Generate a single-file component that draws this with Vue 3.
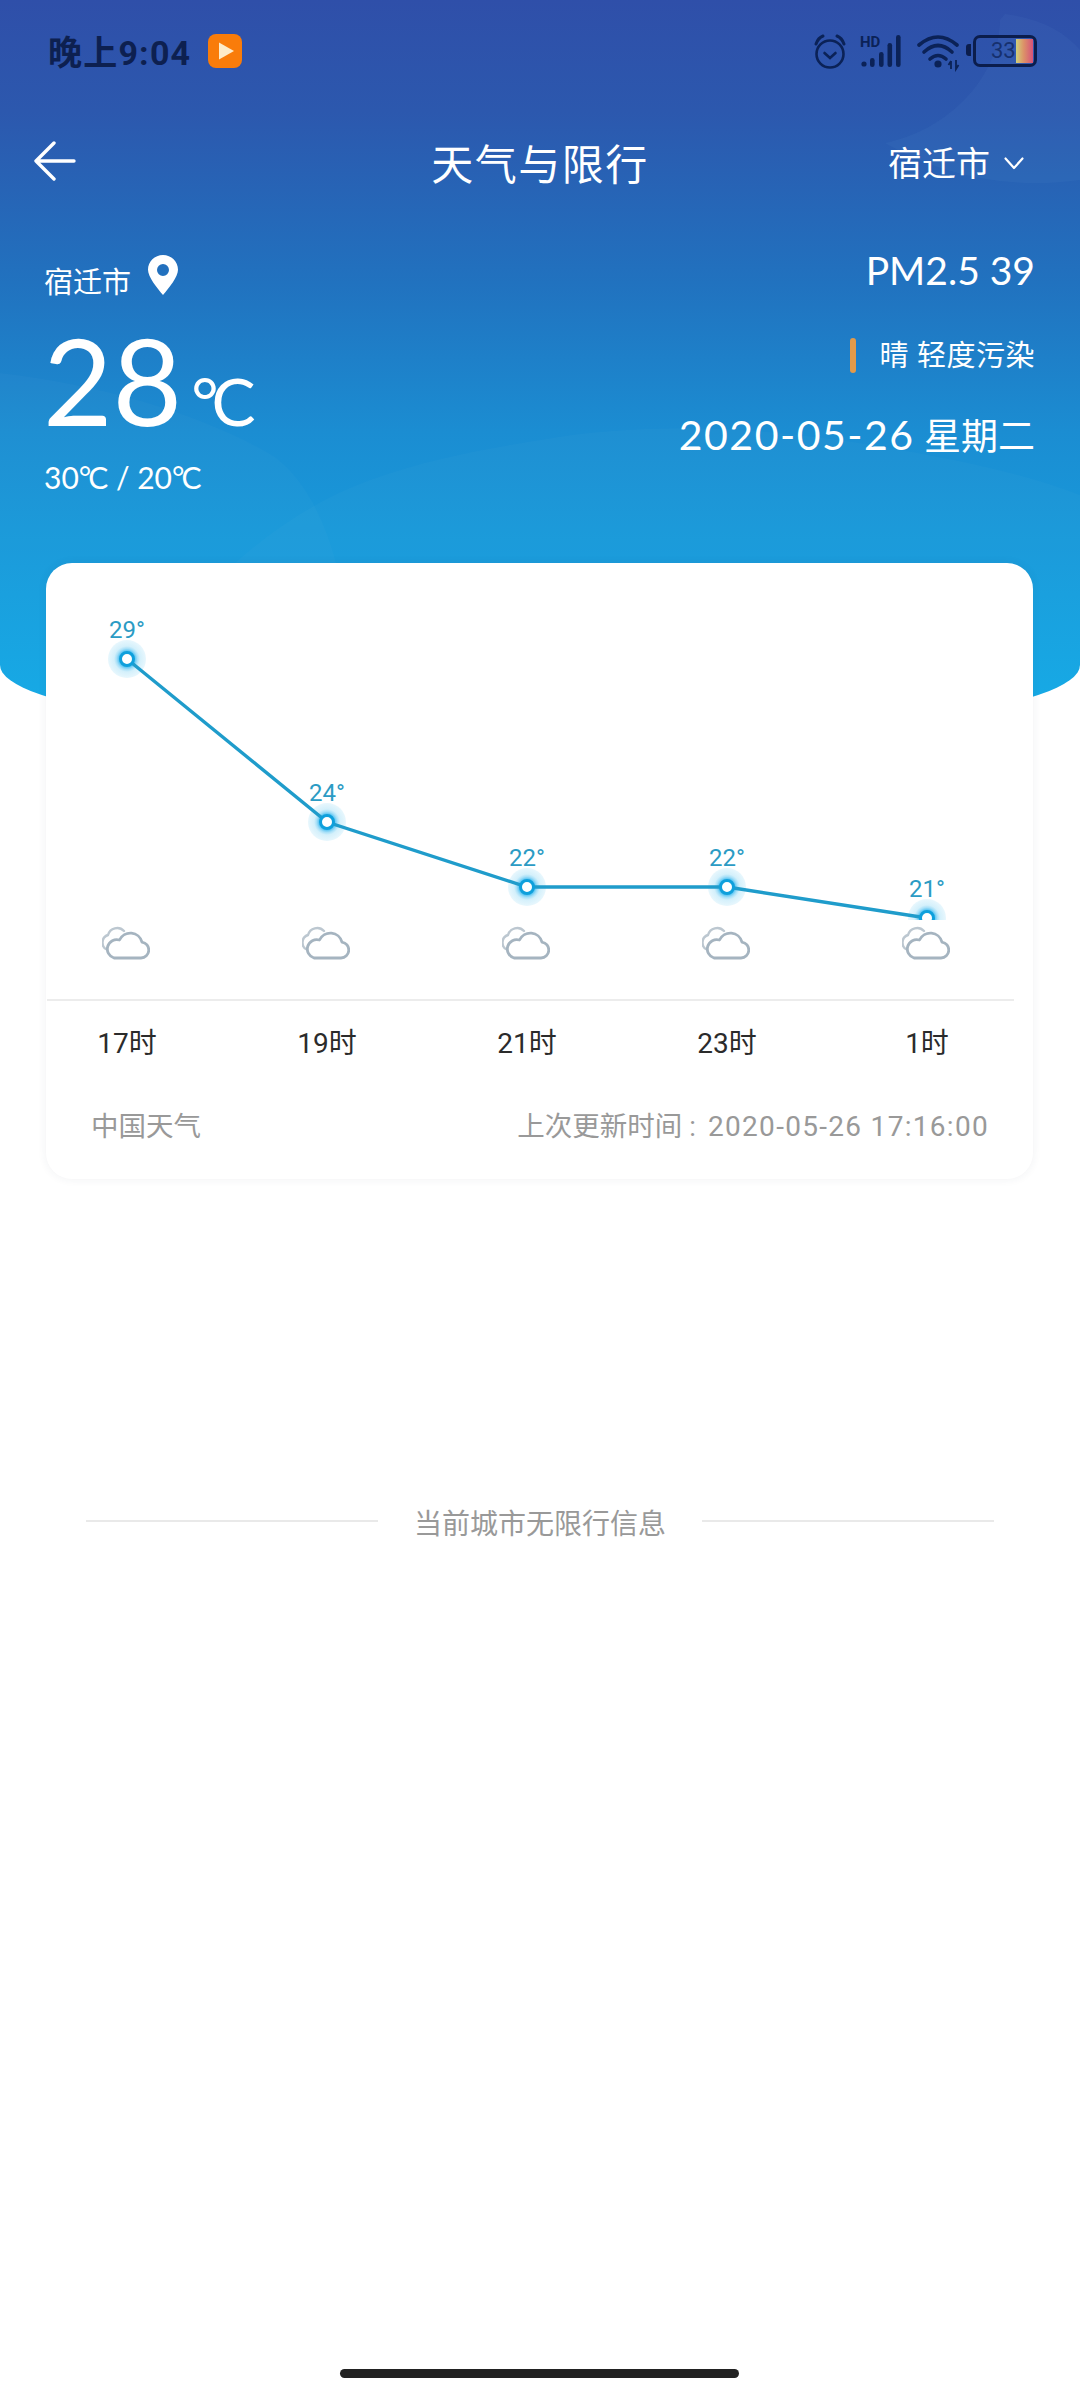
<template>
  <div class="page">
    <div class="hero">
      <!-- 背景上的浅色弧形 -->
      <svg class="hero-arcs" width="1080" height="743" viewBox="0 0 1080 743">
        <path d="M885 143 C950 130 1000 75 1000 20 L1005 14 C1040 18 1065 32 1080 50 V180 C1010 190 940 175 885 143 Z" fill="rgba(130,200,240,0.05)" />
        <path d="M0 373 C110 385 215 420 275 457 C305 480 325 520 336 563 V743 H0 Z" fill="rgba(255,255,255,0.02)" />
        <path d="M180 620 C235 555 300 505 370 480 C430 458 490 448 540 440 C640 422 760 425 884 447 C960 460 1030 475 1080 495 V743 H180 Z" fill="rgba(255,255,255,0.02)" />
      </svg>

      <div class="status-bar">
        <div class="status-left">
          <span class="clock">晚上9:04</span>
          <svg class="app-badge" viewBox="0 0 34 34">
            <rect width="34" height="34" rx="8" fill="#f97c0a" />
            <path d="M11 8.5 L26 17 L11 25.5 Z" fill="#fdebc8" />
          </svg>
        </div>
        <svg class="status-icons" width="153" height="40" viewBox="0 0 153 40">
          <!-- 闹钟 -->
          <g fill="none" stroke="#0b2257" stroke-width="2.6" stroke-linecap="round">
            <circle cx="17" cy="22" r="13.5" />
            <path d="M11.5 21 L17 26 L22.5 21" />
            <path d="M3 12 Q5 6 10 4" stroke-width="3" />
            <path d="M31 12 Q29 6 24 4" stroke-width="3" />
          </g>
          <!-- 信号 -->
          <text x="47" y="15" class="hd">HD</text>
          <g fill="#0b2257">
            <circle cx="51" cy="32" r="2.6" />
            <rect x="57" y="26" width="4.6" height="9" rx="2.3" />
            <rect x="66" y="20" width="4.6" height="15" rx="2.3" />
            <rect x="74.5" y="11" width="4.6" height="24" rx="2.3" />
            <rect x="83" y="3" width="4.6" height="32" rx="2.3" />
          </g>
          <!-- wifi -->
          <g fill="none" stroke="#0b2257" stroke-width="3.6" stroke-linecap="round">
            <path d="M106 13 Q125 -3 144 13" />
            <path d="M111 20 Q125 7 139 20" />
            <path d="M117 27 Q125 20 133 27" />
          </g>
          <circle cx="125" cy="32" r="3.6" fill="#0b2257" />
          <path d="M138 29 V37 M135.5 33 L138 29 M143 28 V37 L145.5 33" fill="none" stroke="#0b2257" stroke-width="1.8" />
        </svg>
        <div class="battery">
          <span class="battery-nub"></span>
          <span class="battery-fill"></span>
          <span class="battery-num">33</span>
        </div>
      </div>

      <div class="nav">
        <svg class="back" width="42" height="40" viewBox="0 0 42 40">
          <path d="M40 20 H2 M20 2 L2 20 L20 38" fill="none" stroke="#fff" stroke-width="3.4" stroke-linecap="round" stroke-linejoin="round" />
        </svg>
        <div class="title">天气与限行</div>
        <div class="city-pick">
          <span>宿迁市</span>
          <svg width="20" height="13" viewBox="0 0 20 13">
            <path d="M1.5 1.5 L10 11 L18.5 1.5" fill="none" stroke="#fff" stroke-width="2.2" stroke-linecap="round" stroke-linejoin="round" />
          </svg>
        </div>
      </div>

      <div class="summary">
        <div class="summary-left">
          <div class="city">
            <span class="city-name">宿迁市</span>
            <svg width="30" height="40" viewBox="0 0 30 40">
              <path fill-rule="evenodd" fill="#fff" d="M15 0 C6.7 0 0 6.6 0 14.8 C0 22 9 33 15 40 C21 33 30 22 30 14.8 C30 6.6 23.3 0 15 0 Z M15 9 A6 6 0 1 1 15 21 A6 6 0 1 1 15 9 Z" />
            </svg>
          </div>
          <div class="temp">
            <span class="temp-num">28</span>
            <span class="temp-unit"><span class="deg">°</span>C</span>
          </div>
          <div class="range">30<span class="deg-small">°</span>C / 20<span class="deg-small">°</span>C</div>
        </div>
        <div class="summary-right">
          <div class="pm">PM2.5 39</div>
          <div class="quality">
            <span class="quality-bar"></span>
            <span class="quality-text">晴 轻度污染</span>
          </div>
          <div class="date"><span class="date-num">2020-05-26</span> 星期二</div>
        </div>
      </div>
    </div>

    <div class="card">
      <svg class="chart" width="987" height="357" viewBox="0 0 987 357">
        <defs>
          <radialGradient id="halo">
            <stop offset="0.42" stop-color="#5cc5f2" />
            <stop offset="0.55" stop-color="#a8e0f8" />
            <stop offset="0.68" stop-color="#d4f0fb" />
            <stop offset="1" stop-color="#e8f7fd" />
          </radialGradient>
        </defs>
        <circle v-for="p in points" :key="p.hour" :cx="p.x" :cy="p.y" r="19" fill="url(#halo)" />
        <polyline :points="linePoints" fill="none" stroke="#1f9ccb" stroke-width="3.4" />
        <g v-for="p in points" :key="p.hour">
          <circle :cx="p.x" :cy="p.y" r="6.5" fill="#fff" stroke="#0fa0dc" stroke-width="3" />
          <text :x="p.x" :y="p.y - 21" class="temp-label">{{ p.temp }}°</text>
        </g>
      </svg>

      <div class="clouds">
        <svg v-for="p in points" :key="p.hour" width="48" height="34" viewBox="0 0 48 34" class="cloud">
          <path d="M5.5 24 A8 8 0 0 1 6 9 A9.5 9.5 0 0 1 22 5" fill="none" stroke="#bcc7d0" stroke-width="2.4" stroke-linecap="round" />
          <path d="M12 32 H39 A8 8 0 0 0 40 16.1 A12 12 0 0 0 17.5 14 A9 9 0 0 0 12 32 Z" fill="#fff" stroke="#a5b4c0" stroke-width="2.8" stroke-linejoin="round" />
        </svg>
      </div>

      <div class="divider"></div>

      <div class="hours">
        <span v-for="p in points" :key="p.hour">{{ p.hour }}时</span>
      </div>

      <div class="card-foot">
        <span>中国天气</span>
        <span>上次更新时间<span class="foot-colon">:</span><span class="foot-time">2020-05-26 17:16:00</span></span>
      </div>
    </div>

    <div class="no-limit">
      <span class="rule"></span>
      <span class="no-limit-text">当前城市无限行信息</span>
      <span class="rule"></span>
    </div>

    <div class="home-bar"></div>
  </div>
</template>

<script setup>
import { computed } from 'vue';

const forecast = [
  { hour: 17, temp: 29, y: 96 },
  { hour: 19, temp: 24, y: 259 },
  { hour: 21, temp: 22, y: 324 },
  { hour: 23, temp: 22, y: 324 },
  { hour: 1, temp: 21, y: 355 },
];

// 折线图的点，间隔 200px
const points = forecast.map((item, i) => ({ ...item, x: 81 + i * 200 }));
const linePoints = computed(() => points.map((p) => `${p.x},${p.y}`).join(' '));
</script>

<style>
html,
body {
  margin: 0;
  background: #fff;
}
</style>

<style scoped>
.page {
  position: relative;
  width: 1080px;
  height: 2400px;
  overflow: hidden;
  background: #fff;
  font-family: Lato, "Noto Sans CJK SC", sans-serif;
}

.hero {
  position: relative;
  height: 743px;
  overflow: hidden;
  color: #fff;
  border-radius: 0 0 50% 50% / 0 0 78px 78px;
  background: linear-gradient(180deg, #2f4fa9 0%, #2c58ae 15%, #2172bf 38%, #1b8dd2 58%, #169fde 80%, #11ace8 100%);
}

.hero-arcs {
  position: absolute;
  left: 0;
  top: 0;
}

.status-bar {
  position: relative;
  display: flex;
  align-items: center;
  height: 101px;
  padding-left: 48px;
}

.status-left {
  display: flex;
  align-items: center;
  gap: 17px;
  flex: 1;
}

.clock {
  font-family: Roboto, "Noto Sans CJK SC", sans-serif;
  font-size: 34px;
  font-weight: 700;
  letter-spacing: 1.2px;
  color: #0d2050;
}

.app-badge {
  width: 34px;
  height: 34px;
}

.status-icons {
  margin-top: 2px;
}

.hd {
  font-family: Roboto, sans-serif;
  font-size: 15px;
  font-weight: 700;
  fill: #0b2257;
}

.battery {
  position: relative;
  box-sizing: border-box;
  width: 64px;
  height: 32px;
  margin: 0 43px 0 7px;
  border: 3.5px solid #0b1d4c;
  border-radius: 7px;
}

.battery-nub {
  position: absolute;
  left: -10px;
  top: 6px;
  width: 5px;
  height: 12px;
  border-radius: 3px 0 0 3px;
  background: #0b1d4c;
}

.battery-fill {
  position: absolute;
  right: 1px;
  top: 1px;
  bottom: 1px;
  width: 17px;
  background: linear-gradient(90deg, #cfd07a, #dc9268 45%, #d5527a);
}

.battery-num {
  position: absolute;
  left: 15px;
  top: -1px;
  font-family: Roboto, sans-serif;
  font-size: 22px;
  line-height: 27px;
  color: #16306e;
}

.nav {
  position: relative;
  display: flex;
  align-items: center;
  justify-content: center;
  height: 120px;
}

.back {
  position: absolute;
  left: 34px;
  top: 40px;
}

.title {
  font-size: 42px;
  letter-spacing: 1.5px;
}

.city-pick {
  position: absolute;
  right: 56px;
  top: 38px;
  display: flex;
  align-items: center;
  gap: 14px;
  font-size: 34px;
  line-height: 48px;
}

.summary {
  position: relative;
  display: flex;
  justify-content: space-between;
  padding: 0 45px;
}

.summary-left {
  margin-left: -1px;
}

.city {
  display: flex;
  align-items: flex-end;
  gap: 17px;
  margin-top: 34px;
  font-size: 29px;
  line-height: 40px;
}

.city-name {
  margin-bottom: -7px;
}

.temp {
  display: flex;
  align-items: baseline;
  margin-top: 20px;
  line-height: 130px;
}

.temp-num {
  font-size: 120px;
  margin-left: -1px;
}

.temp-unit {
  margin-left: 9px;
  font-size: 66px;
}

.deg {
  margin-right: -7px;
}

.range {
  margin-top: -9px;
  font-size: 30px;
  line-height: 40px;
}

.deg-small {
  margin-right: -3px;
}

.summary-right {
  display: flex;
  flex-direction: column;
  align-items: flex-end;
  padding-top: 29px;
}

.pm {
  font-size: 39px;
  line-height: 40px;
}

.quality {
  display: flex;
  align-items: center;
  gap: 24px;
  margin-top: 47px;
  font-size: 29px;
  line-height: 36px;
}

.quality-text {
  letter-spacing: 0.5px;
}

.quality-bar {
  width: 6px;
  height: 35px;
  border-radius: 3px;
  background: #e39a4a;
}

.date {
  margin-top: 38px;
  font-size: 37px;
  line-height: 48px;
}

.date-num {
  font-size: 41px;
  letter-spacing: 1.5px;
}

.card {
  position: relative;
  box-sizing: border-box;
  height: 616px;
  margin: -180px 47px 0 46px;
  border-radius: 26px;
  background: #fff;
  box-shadow: 0 0 10px rgba(40, 60, 90, 0.07);
}

.chart {
  display: block;
}

.temp-label {
  font-family: Roboto, sans-serif;
  font-size: 24px;
  text-anchor: middle;
  fill: #2b9bc4;
}

.clouds {
  display: grid;
  grid-template-columns: repeat(5, 48px);
  column-gap: 152px;
  padding: 6px 0 0 56px;
}

.cloud {
  display: block;
}

.divider {
  height: 2px;
  margin: 39px 19px 0 1px;
  background: #ececec;
}

.hours {
  display: grid;
  grid-template-columns: repeat(5, 100px);
  column-gap: 100px;
  padding: 23px 0 0 31px;
  font-family: Roboto, "Noto Sans CJK SC", sans-serif;
  font-size: 28px;
  line-height: 40px;
  text-align: center;
  color: #2b2b2b;
}

.card-foot {
  display: flex;
  justify-content: space-between;
  padding: 43px 44px 0 45px;
  font-family: Roboto, "Noto Sans CJK SC", sans-serif;
  font-size: 27.5px;
  line-height: 40px;
  color: #999;
}

.foot-colon {
  margin: 0 12px 0 7px;
}

.foot-time {
  font-size: 28px;
  letter-spacing: 1.3px;
}

.no-limit {
  display: flex;
  align-items: center;
  justify-content: space-between;
  margin: 323px 86px 0;
}

.rule {
  width: 292px;
  height: 2px;
  margin-top: -3px;
  background: #e9e9e9;
}

.no-limit-text {
  font-family: "Noto Sans CJK SC", sans-serif;
  font-size: 28px;
  line-height: 40px;
  color: #999;
}

.home-bar {
  position: absolute;
  left: 340px;
  bottom: 22px;
  width: 399px;
  height: 9px;
  border-radius: 5px;
  background: #222;
}
</style>
